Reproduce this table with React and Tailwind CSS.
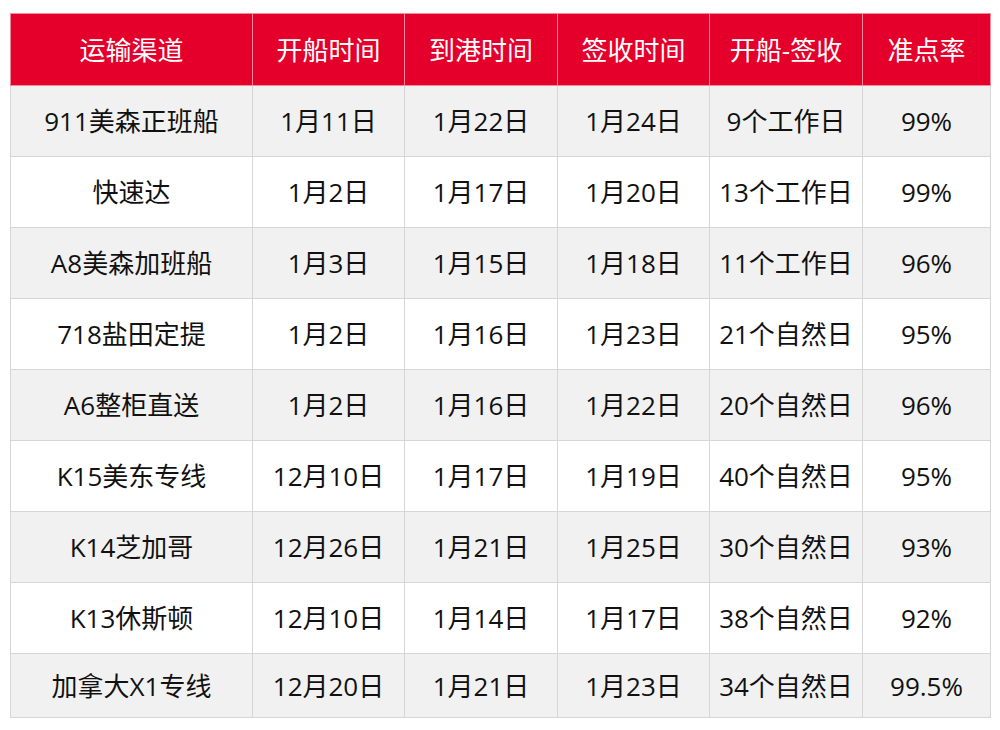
const headers = ['运输渠道', '开船时间', '到港时间', '签收时间', '开船-签收', '准点率'];

const rows = [
    ['911美森正班船', '1月11日', '1月22日', '1月24日', '9个工作日', '99%'],
    ['快速达', '1月2日', '1月17日', '1月20日', '13个工作日', '99%'],
    ['A8美森加班船', '1月3日', '1月15日', '1月18日', '11个工作日', '96%'],
    ['718盐田定提', '1月2日', '1月16日', '1月23日', '21个自然日', '95%'],
    ['A6整柜直送', '1月2日', '1月16日', '1月22日', '20个自然日', '96%'],
    ['K15美东专线', '12月10日', '1月17日', '1月19日', '40个自然日', '95%'],
    ['K14芝加哥', '12月26日', '1月21日', '1月25日', '30个自然日', '93%'],
    ['K13休斯顿', '12月10日', '1月14日', '1月17日', '38个自然日', '92%'],
    ['加拿大X1专线', '12月20日', '1月21日', '1月23日', '34个自然日', '99.5%'],
];

const widths = ['w-[242px]', 'w-[152px]', 'w-[153px]', 'w-[152px]', 'w-[153px]', 'w-[128px]'];

export default function App() {
    return (
        <div className="w-[1000px] h-[730px] bg-white pt-[13px] pl-[10px]" style={{ fontFamily: '"Open Sans", "Noto Sans CJK SC", sans-serif' }}>
            <table className="border-collapse table-fixed w-[980px] text-[26px] leading-none text-[#111]">
                <thead>
                    <tr className="h-[72px] bg-[#e4002b] text-white">
                        {headers.map((h, i) => (
                            <th key={h} className={`${widths[i]} font-normal text-center border border-[#f08a9c]`}>
                                {h}
                            </th>
                        ))}
                    </tr>
                </thead>
                <tbody>
                    {rows.map((r, ri) => (
                        <tr key={r[0]} className={`${ri === rows.length - 1 ? 'h-[64px]' : 'h-[71px]'} ${ri % 2 === 0 ? 'bg-[#f1f1f1]' : 'bg-white'}`}>
                            {r.map((c, ci) => (
                                <td key={ci} className="text-center border border-[#d6d6d6] whitespace-nowrap">
                                    {c}
                                </td>
                            ))}
                        </tr>
                    ))}
                </tbody>
            </table>
        </div>
    );
}
